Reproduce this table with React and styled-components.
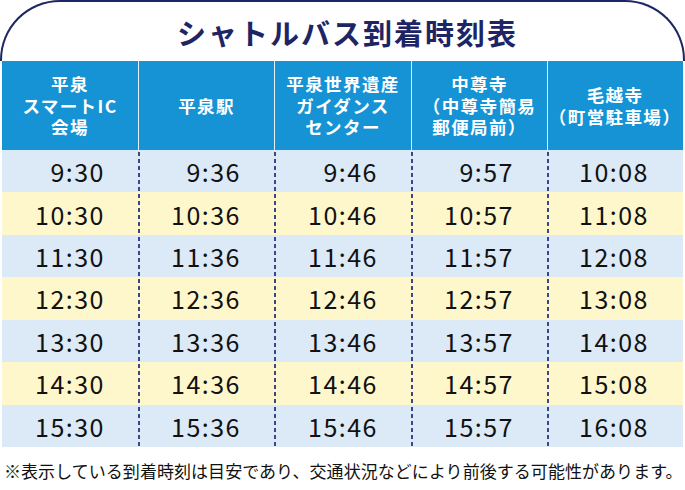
import React from "react";
import styled, { createGlobalStyle } from "styled-components";

const GlobalStyle = createGlobalStyle`
  html, body {
    margin: 0;
    padding: 0;
    background: #fff;
  }
  body {
    font-family: "Noto Sans CJK JP", "Noto Sans", sans-serif;
  }
`;

const NAVY = "#1e2565";
const COLS = "136px 136px 137px 136px 135px";

const stops = [
  ["平泉", "スマートIC", "会場"],
  ["平泉駅"],
  ["平泉世界遺産", "ガイダンス", "センター"],
  ["中尊寺", "（中尊寺簡易", "郵便局前）"],
  ["毛越寺", "（町営駐車場）"],
];

const rows = [9, 10, 11, 12, 13, 14, 15].map((h) => [
  `${h}:30`,
  `${h}:36`,
  `${h}:46`,
  `${h}:57`,
  `${h + 1}:08`,
]);

const App = () => {
  return (
    <Page>
      <GlobalStyle />
      <TitleBox>
        <Title>シャトルバス到着時刻表</Title>
      </TitleBox>
      <Table>
        <HeadRow>
          {stops.map((lines, i) => (
            <HeadCell key={i} $first={i === 0}>
              {lines.map((l, j) => (
                <span key={j}>{l}</span>
              ))}
            </HeadCell>
          ))}
        </HeadRow>
        {rows.map((row, r) => (
          <Row key={r} $alt={r % 2 === 1}>
            {row.map((t, i) => (
              <TimeCell key={i} $first={i === 0}>
                {t}
              </TimeCell>
            ))}
          </Row>
        ))}
      </Table>
      <Note>
        ※表示している到着時刻は目安であり、交通状況などにより前後する可能性があります。
      </Note>
    </Page>
  );
};

const Page = styled.div`
  width: 685px;
  height: 490px;
  background: #fff;
  overflow: hidden;
`;

const TitleBox = styled.div`
  height: 61px;
  box-sizing: border-box;
  border: 2.5px solid ${NAVY};
  border-bottom: none;
  border-radius: 60px 60px 0 0;
  display: flex;
  align-items: center;
  justify-content: center;
  padding-left: 10px;
`;

const Title = styled.h1`
  margin: 2px 0 0 0;
  font-size: 29px;
  font-weight: 700;
  letter-spacing: 2px;
  color: ${NAVY};
  line-height: 1;
`;

const Table = styled.div`
  margin: 0 2px;
  display: flex;
  flex-direction: column;
`;

const HeadRow = styled.div`
  display: grid;
  grid-template-columns: ${COLS};
  height: 89px;
  background: #1593d5;
`;

const HeadCell = styled.div`
  display: flex;
  flex-direction: column;
  align-items: center;
  justify-content: center;
  border-left: ${(p) => (p.$first ? "none" : "1.5px solid #e6f1fa")};
  color: #fff;
  font-size: 17.5px;
  font-weight: 700;
  line-height: 21.5px;
  letter-spacing: 1.4px;
  text-align: center;
  white-space: nowrap;
`;

const Row = styled.div`
  display: grid;
  grid-template-columns: ${COLS};
  height: 42.43px;
  background: ${(p) => (p.$alt ? "#fff7cc" : "#dce9f6")};
`;

const TimeCell = styled.div`
  display: flex;
  align-items: center;
  justify-content: flex-end;
  padding-right: 33px;
  background-image: ${(p) =>
    p.$first
      ? "none"
      : "linear-gradient(to bottom, #3c4789 0, #3c4789 4px, transparent 4px)"};
  background-size: 1.5px 7px;
  background-repeat: repeat-y;
  background-position: 0 2px;
  color: #111;
  font-size: 25px;
  letter-spacing: 1.5px;
  font-variant-numeric: tabular-nums;
`;

const Note = styled.p`
  margin: 0;
  padding: 14px 0 0 4px;
  font-size: 17px;
  line-height: 20px;
  color: #111;
  white-space: nowrap;
  letter-spacing: 0.05px;
`;

export default App;
